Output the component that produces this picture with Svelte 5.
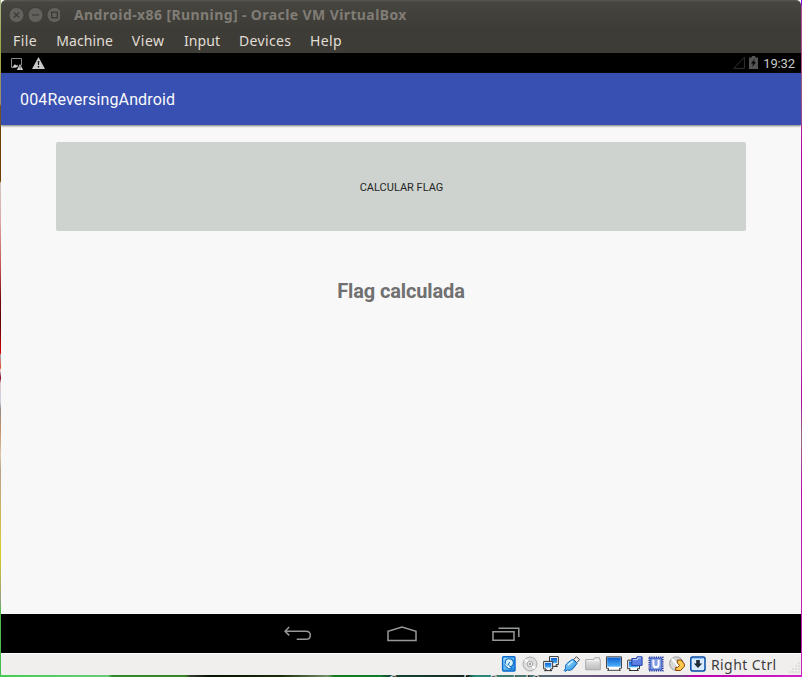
<script>
  const menus = [
    { label: 'File', width: 43.2, spacing: 0.45 },
    { label: 'Machine', width: 75.6, spacing: 0.1 },
    { label: 'View', width: 52.2, spacing: 0.55 },
    { label: 'Input', width: 55, spacing: 0.1 },
    { label: 'Devices', width: 71, spacing: 0.36 },
    { label: 'Help', width: 50, spacing: 0.35 }
  ];
</script>

<div class="desktop">
  <div class="window">
    <header class="titlebar">
      <svg class="controls" width="52" height="16" viewBox="0 0 52 16">
        <g fill="#62615c" stroke="#353430" stroke-width=".6">
          <circle cx="8.5" cy="8" r="7.5" /><circle cx="27.5" cy="8" r="7.5" /><circle cx="46.5" cy="8" r="7.5" />
        </g>
        <g fill="none" stroke="#383733" stroke-width="1.2">
          <path d="M5.8 5.3l5.4 5.4M11.2 5.3l-5.4 5.4M24 8h7" />
          <rect x="43.7" y="5.2" width="5.6" height="5.6" />
        </g>
      </svg>
      <span class="title">Android-x86 [Running] - Oracle VM VirtualBox</span>
    </header>
    <nav class="menubar">
      {#each menus as menu}
        <span class="menu" style="width: {menu.width}px; letter-spacing: {menu.spacing}px">{menu.label}</span>
      {/each}
    </nav>

    <div class="android-status">
      <svg class="shot" width="12" height="12" viewBox="0 0 12 12">
        <path d="M.5 9.5v-9h10v7M.5 9.5h5" fill="none" stroke="#8b8b8b" />
        <path d="M1.5 9l2.3-2.7 1.7 1.2 1.2-.7V9z" fill="#d0d0d0" />
        <path d="M9 6.1l3.2 5.9H5.8z" fill="#cecece" /><path d="M9 8v2M9 10.6v.7" stroke="#333" stroke-width=".7" />
      </svg>
      <svg width="13" height="12" viewBox="0 0 13 12">
        <path d="M6.5 0L13 12H0z" fill="#c9c9c9" /><path d="M5.7 4h1.6l-.3 4H6zM5.8 9h1.4v1.5H5.8z" fill="#111" />
      </svg>
      <span class="spacer"></span>
      <svg class="signal" width="12" height="13" viewBox="0 0 12 13"><path d="M.8 12.4H11.4V1.2z" fill="none" stroke="#343434" stroke-width=".9" /></svg>
      <svg class="battery" width="9" height="13" viewBox="0 0 9 13">
        <path d="M0 1.5h2.7V0h3.6v1.5H9V13H0z" fill="#535553" /><path d="M5.7 2.7L2 7.4h2L3.2 11 7 6H5z" fill="#080808" />
      </svg>
      <span class="clock">19:32</span>
    </div>

    <div class="appbar"><span>004ReversingAndroid</span></div>
    <main>
      <button>CALCULAR FLAG</button>
      <p>Flag calculada</p>
    </main>

    <div class="navigation">
      <svg width="28" height="16" viewBox="0 0 28 16"><path d="M5.2 1L1 5.2l4.2 4.2M1 5.2h20.8c2.7 0 4.5 1.6 4.5 4s-1.8 4.1-4.5 4.1h-9.1" /></svg>
      <svg width="30" height="16" viewBox="0 0 30 16"><path d="M1 14.4V5.4L15 1l14 4.4v9z" /></svg>
      <svg width="28" height="16" viewBox="0 0 28 16"><path d="M1 5.8h21v8.4H1zM6.5 2.2h20.3v8.7" /></svg>
    </div>

    <footer>
      <svg class="devices" width="205" height="16" viewBox="0 0 205 16">
        <defs>
          <linearGradient id="screen" x2="0" y2="1"><stop stop-color="#0b60d2" /><stop offset="1" stop-color="#4eb2fa" /></linearGradient>
          <linearGradient id="disk" x2="1" y2="1"><stop stop-color="#a7e6ff" /><stop offset="1" stop-color="#208ae0" /></linearGradient>
          <linearGradient id="silver" x2="0" y2="1"><stop stop-color="#eee" /><stop offset="1" stop-color="#bcbcbc" /></linearGradient>
        </defs>
        <g>
          <rect x="1.6" y=".8" width="12.4" height="14.2" rx="1" fill="url(#disk)" stroke="#0868d0" stroke-width="1.4" />
          <path d="M4.6 7.7C3.6 4.6 5.4 2.7 8 2.7c2.5 0 4.4 1.7 4.4 4.1 0 2.2-1.4 3.8-3.5 3.9" fill="#d5f4ff" stroke="#0864bd" stroke-width="1.1" />
          <path d="M8.7 6.2L6.6 9.4M3.2 8.8l4.5 3.9h3.5L7.4 8.9" fill="#f4fdff" stroke="#0864bd" stroke-width="1" />
        </g>
        <g transform="translate(21)">
          <circle cx="8" cy="8" r="7" fill="#dedede" stroke="#aaa" /><path d="M8 8L3 3.4M8 8l5 4.6" stroke="#fff" stroke-width="2" />
          <circle cx="8" cy="8" r="2.8" fill="#e9e9e9" stroke="#aaa" /><circle cx="8" cy="8" r="1" fill="#888" />
        </g>
        <g transform="translate(42)">
          <path d="M6.5.6h8.8v8H13v1.8h1.5H9V8.6H6.5z" fill="#fff" stroke="#333" />
          <rect x="7.8" y="2" width="6.2" height="5.2" fill="url(#screen)" />
          <path d="M.7 5.4h9v7.5H7.5v1.7H9H1.5H3v-1.7H.7z" fill="#fff" stroke="#333" />
          <rect x="2" y="6.8" width="6.4" height="4.8" fill="url(#screen)" />
        </g>
        <g transform="translate(63)">
          <path d="M9.7 3.5L12.5.7l3 3-2.9 3z" fill="#eee" stroke="#444" />
          <path d="M8.8 3.1l4.2 4.3-3.8 5c-1.8 1.9-4.1 2.3-5.9 1.5L1 15.4l-.8-1 1.5-2.1C.9 10 2 8.1 3.8 6.7z" fill="url(#disk)" stroke="#0860b8" />
          <path d="M8.6 5.2L4 9.1" stroke="#d5f4ff" stroke-width="1.5" />
        </g>
        <g transform="translate(84)">
          <path d="M.7 13.8V3.6h8l1.2-2h4.7v2h.7v10.2z" fill="url(#silver)" stroke="#aaa" /><path d="M1.3 4.7h13" stroke="#f4f4f4" />
        </g>
        <g transform="translate(105)">
          <path d="M.5.8h15v11.5h-2v2h1H1.5h1v-2h-2z" fill="#fff" stroke="#444" />
          <rect x="1.2" y="1.5" width="13.6" height="9.2" fill="url(#screen)" />
        </g>
        <g transform="translate(126)">
          <path d="M.7 4.2h11.8v8.5h-2v1.8h1H2h1v-1.8H.7z" fill="#fff" stroke="#333" /><rect x="2" y="5.5" width="9.2" height="5.8" fill="url(#screen)" />
          <path d="M4.8 2.5h5.1V.8h5.2v8.6H4.8z" fill="#5c80e1" stroke="#2545a8" /><path d="M6 3.6h4.5V2h3.3" stroke="#c5d5ff" fill="none" />
        </g>
        <g transform="translate(147)">
          <rect x="1.2" y="1.2" width="13.6" height="13.6" fill="none" stroke="#20349c" stroke-width="1.5" stroke-dasharray="1.2 1" />
          <rect x="2.2" y="2.2" width="11.6" height="11.6" fill="#829be2" stroke="#3154bd" /><path d="M5.4 3.8v4.4c0 4.2 5.2 4.2 5.2 0V3.8" fill="none" stroke="#fff" stroke-width="2" />
        </g>
        <g transform="translate(168)">
          <circle cx="7.4" cy="7.6" r="6.8" fill="#d8d8d8" stroke="#9c9c9c" /><path d="M7.5 7.8L3 3M7.5 7.8l4 5" stroke="#fff" stroke-width="2" />
          <path d="M8.3 4h3.8l3.3 4.1v2.2l-3.8 4.2H6.7v-3.1h1.8l2.2-2-2.4-2.3z" fill="#ffc94d" stroke="#874000" />
        </g>
        <g transform="translate(189)">
          <rect x=".8" y=".9" width="14.2" height="14" rx="1.8" fill="#d9ecff" stroke="#0649a7" stroke-width="1.5" />
          <path d="M2 2.6h11.5" stroke="#85beff" /><path d="M6.2 4h3.6v3.4h2.4L8 12.1 3.8 7.4h2.4z" fill="#202c38" />
        </g>
      </svg>
      <span class="host-key">Right Ctrl</span>
      <svg class="grip" width="12" height="12" viewBox="0 0 12 12"><path d="M9 1h2M6 4h2M9 4h2M3 7h2M6 7h2M9 7h2M0 10h2M3 10h2M6 10h2M9 10h2" stroke="#dcd7d4" stroke-width="1.5" /></svg>
    </footer>
  </div>
  <div class="wallpaper-edge"><span>Company of</span><span>Portal 2</span></div>
</div>

<style>
  :global(body) { margin: 0; overflow: hidden; }
  .desktop {
    box-sizing: border-box; width: 802px; height: 677px; padding: 0 1px;
    background:
      linear-gradient(#7c00d4 0 2px, #b1539b 8px, #b34583 95px, #b300a9 150px, #a20096 240px, #b536a5 340px, #aa0b9d 400px, #947082 438px, #b80bad 490px, #c228b8 677px) right / 1px 100% no-repeat,
      linear-gradient(#abb78c 0, #9eaa43 50px, #b49a67 104px, #704100 106px, #724000 181px, #d4c6c6 183px, #dca9a8 220px, #c34b4b 270px, #71090d 300px, #5e0000 322px, #d40000 353px, #aaa 355px, #e24d38 368px, #eee 370px, #850021 378px, #dfc8cf 383px, #c7d5df 402px, #958a8a 409px, #c79164 430px, #d9c6ad 455px, #b8a386 470px, #c9a778 490px, #d8be45 530px, #d7cd21 554px, #9a9d83 600px, #54b752 610px, #43bd50 677px) left / 1px 100% no-repeat,
      #fff;
  }
  .window { display: flex; flex-direction: column; height: 675px; }
  .titlebar {
    height: 29px; display: flex; align-items: center; box-sizing: border-box; padding-left: 7px;
    background: linear-gradient(#55534e 0 1px, #474540 2px, #3d3c37 28px); border-radius: 5px 5px 0 0;
    color: #807d76; font: bold 14px/20px "Noto Sans", sans-serif;
  }
  .controls { display: block; margin-right: 14px; }
  .title { white-space: nowrap; letter-spacing: .4px; }
  .menubar { height: 24px; display: flex; align-items: center; background: #3d3c37; padding-left: 12px; color: #e1ded5; font: 14px/20px "Noto Sans", sans-serif; }
  .menu { flex: none; white-space: nowrap; }
  .android-status { height: 20px; display: flex; align-items: center; background: #000; color: #c9c9c9; box-sizing: border-box; padding: 0 6px 0 10px; font: 13px/20px Roboto, sans-serif; }
  .shot { margin: 1px 9px 0 0; }
  .spacer { flex: 1; }
  .signal { margin: 0 4px 1px 0; }
  .battery { margin: 0 5px 2px 0; }
  .clock { letter-spacing: -.12px; padding-top: 1px; }
  .appbar { position: relative; height: 52px; display: flex; align-items: center; box-sizing: border-box; padding: 1px 0 0 19px; color: #fafafa; background: #3750b1; box-shadow: 0 1px 2px #777; font: 16px/24px Roboto, sans-serif; letter-spacing: .15px; }
  main { height: 489px; display: flex; flex-direction: column; align-items: center; box-sizing: border-box; padding-top: 17px; background: #f8f8f8; }
  button { width: 690px; height: 89px; flex: none; border: 0; border-radius: 2px; padding: 2px 0 0 1px; background: #ced3cf; color: #242624; font: 11px Roboto, sans-serif; }
  p { margin: 47px 0 0; color: #707070; font: bold 20px/26px Roboto, sans-serif; letter-spacing: -.12px; }
  .navigation { height: 39px; display: flex; align-items: center; justify-content: center; gap: 75px; background: #000; box-sizing: border-box; padding: 1px 0 0 1px; }
  .navigation path { fill: none; stroke: #969a96; stroke-width: 1.5; }
  footer { height: 22px; display: flex; align-items: center; justify-content: flex-end; box-sizing: border-box; border-top: 1px solid #fff; background: #f1efee; color: #3d3d3d; font: 14px/20px "Noto Sans", sans-serif; }
  .devices { margin-bottom: 2px; }
  .host-key { width: 78px; margin-left: 5px; white-space: nowrap; letter-spacing: .4px; }
  .grip { align-self: flex-end; margin-bottom: 1px; }
  .wallpaper-edge { height: 2px; margin: 0 -1px; overflow: hidden; display: flex; gap: 22px; box-sizing: border-box; padding-left: 388px; color: #ddd; font: 14px/14px "Noto Sans", sans-serif; text-shadow: 1px 1px 1px #000; background: linear-gradient(90deg, #45cc50 0, #6cca7b 108px, #31882a 112px, #378525 185px, #343b34 190px, #071100 210px, #182a0a 280px, #73916c 328px, #157c1a 334px, #0f7c30 380px, #124634 390px, #182821 465px, #288879 475px, #48756d 520px, #68547b 580px, #67457d 680px, #b900b0 695px, #cf21c5 802px); }
  .wallpaper-edge span { margin-top: -2px; white-space: nowrap; }
</style>
